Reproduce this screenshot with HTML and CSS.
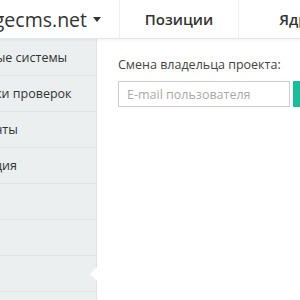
FILE: index.html
```
<!DOCTYPE html>
<html lang="ru">
<head>
  <meta charset="UTF-8" />
  <title>Настройки проекта</title>
  <link rel="stylesheet" href="styles.css">
</head>
<body>
  <div class="page">
    <div class="header">
      <div class="brand">knowledgecms.net <span class="caret"></span></div>
      <div class="tab">Позиции</div>
      <div class="tab">Ядро</div>
    </div>

    <div class="main">
      <div class="sidebar">
        <div class="row">Поисковые системы</div>
        <div class="row">Настройки проверок</div>
        <div class="row">Конкуренты</div>
        <div class="row">Интеграция</div>
        <div class="row">Доступ</div>
        <div class="row">Экспорт</div>
        <div class="row active">Доступы</div>
        <div class="row">Удаление</div>
      </div>

      <div class="content">
        <div class="label">Смена владельца проекта:</div>
        <div class="form">
          <input class="email" type="text" placeholder="E-mail пользователя">
          <button class="submit">Сменить</button>
        </div>
      </div>
    </div>
  </div>
</body>
</html>
```

FILE: styles.css
```
body {
  margin: 0;
  background-color: #ffffff;
  font-family: 'Open Sans', sans-serif;
  color: #333;
  overflow: hidden;
}

.page {
  margin-left: -67px;
  width: 560px;
}

.header {
  display: flex;
  height: 38px;
  border-bottom: 1px solid #e3e6e8;
  box-shadow: 0 1px 3px rgba(0, 0, 0, 0.06);
  position: relative;
  z-index: 2;
  background-color: #fff;
}

.brand {
  flex-shrink: 0;
  width: 187px;
  display: flex;
  align-items: center;
  justify-content: flex-end;
  padding-right: 18px;
  box-sizing: border-box;
  font-size: 19.5px;
  color: #333;
  white-space: nowrap;
  overflow: hidden;
  border-right: 1px solid #eef0f1;
}

.caret {
  display: inline-block;
  margin-left: 6px;
  border-top: 5px solid #333;
  border-left: 4px solid transparent;
  border-right: 4px solid transparent;
}

.tab {
  flex-shrink: 0;
  width: 118px;
  display: flex;
  align-items: center;
  justify-content: center;
  font-size: 15px;
  font-weight: 600;
  color: #333;
  border-right: 1px solid #eef0f1;
}

.main {
  display: flex;
}

.sidebar {
  flex-shrink: 0;
  width: 163px;
  background-color: #eceff0;
  border-right: 1px solid #dde3e6;
  height: 270px;
}

.row {
  height: 36px;
  border-bottom: 1px solid #dfe4e7;
  box-sizing: border-box;
  display: flex;
  align-items: center;
  padding-left: 11px;
  font-size: 12.5px;
  color: #333;
  white-space: nowrap;
  position: relative;
}

.row:first-child {
  height: 37px;
}

.active {
  color: #1abc9c;
}

.active::after {
  content: "";
  position: absolute;
  right: -1px;
  top: 11px;
  border-right: 7px solid #fff;
  border-top: 7px solid transparent;
  border-bottom: 7px solid transparent;
}

.content {
  padding: 17px 0 0 21px;
}

.label {
  font-size: 12.5px;
  color: #444;
  margin-bottom: 8px;
}

.form {
  display: flex;
  gap: 3px;
}

.email {
  width: 172px;
  height: 26px;
  box-sizing: border-box;
  border: 1px solid #cfcfcf;
  padding: 0 8px;
  font-family: 'Open Sans', sans-serif;
  font-size: 12.5px;
  color: #333;
}

.email::placeholder {
  color: #aaa;
}

.submit {
  height: 26px;
  border: none;
  background-color: #1abc9c;
  color: #fff;
  font-family: 'Open Sans', sans-serif;
  font-size: 12.5px;
  padding: 0 14px;
}
```
